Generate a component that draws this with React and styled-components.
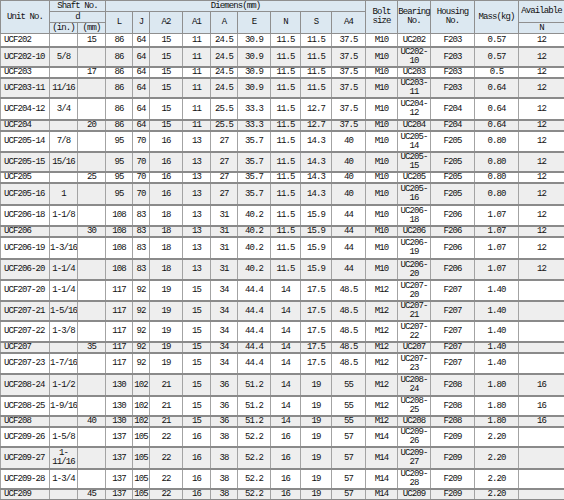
import styled, { createGlobalStyle } from 'styled-components';

const GlobalStyle = createGlobalStyle`
  html, body {
    margin: 0;
    padding: 0;
    background: #ffffff;
  }
  body {
    font-family: "Liberation Mono", "DejaVu Sans Mono", monospace;
  }
`;

const Table = styled.table`
  width: 564px;
  table-layout: fixed;
  border-collapse: collapse;
  font-family: "Liberation Mono", "DejaVu Sans Mono", monospace;
  font-size: 9px;
  letter-spacing: -0.9px;
  color: #111111;
`;

const HeadCell = styled.th`
  background: #dce8f1;
  border: 1px solid #8f8f8f;
  font-weight: normal;
  text-align: center;
  vertical-align: middle;
  padding: 0;
  height: 10px;
  line-height: 9px;
  white-space: nowrap;
`;

const Row = styled.tr`
  background: ${props => (props.$alt ? '#eeeeee' : '#ffffff')};
`;

const Cell = styled.td`
  height: ${props => props.$h - 2}px;
  border-left: 1px solid #a3a3a3;
  border-right: 1px solid #a3a3a3;
  border-bottom: 2px solid #8a8a8a;
  padding: 0 ${props => (props.$left ? '3px' : '0')};
  text-align: ${props => (props.$left ? 'left' : 'center')};
  vertical-align: middle;
  line-height: 9px;
  white-space: nowrap;
  overflow: hidden;
`;

const widths = [49, 28, 28, 27, 17, 33, 28, 27, 33, 30, 31, 34, 32, 33, 44, 44, 46];

// 列: unit, in, mm, L, J, A2, A1, A, E, N, S, A4, bolt, bearing, housing, mass, N
const rows = [
  [14, 'UCF202', '', '15', '86', '64', '15', '11', '24.5', '30.9', '11.5', '11.5', '37.5', 'M10', 'UC202', 'F203', '0.57', '12'],
  [18, 'UCF202-10', '5/8', '', '86', '64', '15', '11', '24.5', '30.9', '11.5', '11.5', '37.5', 'M10', 'UC202-|10', 'F203', '0.57', '12'],
  [11, 'UCF203', '', '17', '86', '64', '15', '11', '24.5', '30.9', '11.5', '11.5', '37.5', 'M10', 'UC203', 'F203', '0.5', '12'],
  [19, 'UCF203-11', '11/16', '', '86', '64', '15', '11', '24.5', '30.9', '11.5', '11.5', '37.5', 'M10', 'UC203-|11', 'F203', '0.64', '12'],
  [22, 'UCF204-12', '3/4', '', '86', '64', '15', '11', '25.5', '33.3', '11.5', '12.7', '37.5', 'M10', 'UC204-|12', 'F204', '0.64', '12'],
  [10, 'UCF204', '', '20', '86', '64', '15', '11', '25.5', '33.3', '11.5', '12.7', '37.5', 'M10', 'UC204', 'F204', '0.64', '12'],
  [21, 'UCF205-14', '7/8', '', '95', '70', '16', '13', '27', '35.7', '11.5', '14.3', '40', 'M10', 'UC205-|14', 'F205', '0.80', '12'],
  [18, 'UCF205-15', '15/16', '', '95', '70', '16', '13', '27', '35.7', '11.5', '14.3', '40', 'M10', 'UC205-|15', 'F205', '0.80', '12'],
  [11, 'UCF205', '', '25', '95', '70', '16', '13', '27', '35.7', '11.5', '14.3', '40', 'M10', 'UC205', 'F205', '0.80', '12'],
  [22, 'UCF205-16', '1', '', '95', '70', '16', '13', '27', '35.7', '11.5', '14.3', '40', 'M10', 'UC205-|16', 'F205', '0.80', '12'],
  [21, 'UCF206-18', '1-1/8', '', '108', '83', '18', '13', '31', '40.2', '11.5', '15.9', '44', 'M10', 'UC206-|18', 'F206', '1.07', '12'],
  [11, 'UCF206', '', '30', '108', '83', '18', '13', '31', '40.2', '11.5', '15.9', '44', 'M10', 'UC206', 'F206', '1.07', '12'],
  [22, 'UCF206-19', '1-3/16', '', '108', '83', '18', '13', '31', '40.2', '11.5', '15.9', '44', 'M10', 'UC206-|19', 'F206', '1.07', '12'],
  [21, 'UCF206-20', '1-1/4', '', '108', '83', '18', '13', '31', '40.2', '11.5', '15.9', '44', 'M10', 'UC206-|20', 'F206', '1.07', '12'],
  [21, 'UCF207-20', '1-1/4', '', '117', '92', '19', '15', '34', '44.4', '14', '17.5', '48.5', 'M12', 'UC207-|20', 'F207', '1.40', ''],
  [20, 'UCF207-21', '1-5/16', '', '117', '92', '19', '15', '34', '44.4', '14', '17.5', '48.5', 'M12', 'UC207-|21', 'F207', '1.40', ''],
  [21, 'UCF207-22', '1-3/8', '', '117', '92', '19', '15', '34', '44.4', '14', '17.5', '48.5', 'M12', 'UC207-|22', 'F207', '1.40', ''],
  [11, 'UCF207', '', '35', '117', '92', '19', '15', '34', '44.4', '14', '17.5', '48.5', 'M12', 'UC207', 'F207', '1.40', ''],
  [21, 'UCF207-23', '1-7/16', '', '117', '92', '19', '15', '34', '44.4', '14', '17.5', '48.5', 'M12', 'UC207-|23', 'F207', '1.40', ''],
  [22, 'UCF208-24', '1-1/2', '', '130', '102', '21', '15', '36', '51.2', '14', '19', '55', 'M12', 'UC208-|24', 'F208', '1.80', '16'],
  [20, 'UCF208-25', '1-9/16', '', '130', '102', '21', '15', '36', '51.2', '14', '19', '55', 'M12', 'UC208-|25', 'F208', '1.80', '16'],
  [11, 'UCF208', '', '40', '130', '102', '21', '15', '36', '51.2', '14', '19', '55', 'M12', 'UC208', 'F208', '1.80', '16'],
  [20, 'UCF209-26', '1-5/8', '', '137', '105', '22', '16', '38', '52.2', '16', '19', '57', 'M14', 'UC209-|26', 'F209', '2.20', ''],
  [22, 'UCF209-27', '1-|11/16', '', '137', '105', '22', '16', '38', '52.2', '16', '19', '57', 'M14', 'UC209-|27', 'F209', '2.20', ''],
  [20, 'UCF209-28', '1-3/4', '', '137', '105', '22', '16', '38', '52.2', '16', '19', '57', 'M14', 'UC209-|28', 'F209', '2.20', ''],
  [11, 'UCF209', '', '45', '137', '105', '22', '16', '38', '52.2', '16', '19', '57', 'M14', 'UC209', 'F209', '2.20', ''],
];

// "|" で改行
const lines = (text) => {
  const parts = text.split('|');
  return parts.map((p, i) => (
    <span key={i}>
      {i > 0 && <br />}
      {p}
    </span>
  ));
};

const dimensions = ['L', 'J', 'A2', 'A1', 'A', 'E', 'N', 'S', 'A4'];

export default function App() {
  return (
    <>
      <GlobalStyle />
      <Table>
        <colgroup>
          {widths.map((w, i) => (
            <col key={i} style={{ width: w }} />
          ))}
        </colgroup>
        <thead>
          <tr>
            <HeadCell rowSpan={3}>Unit No.</HeadCell>
            <HeadCell colSpan={2}>Shaft No.</HeadCell>
            <HeadCell colSpan={9}>Diemens(mm)</HeadCell>
            <HeadCell rowSpan={3}>Bolt<br />size</HeadCell>
            <HeadCell rowSpan={3}>Bearing<br />No.</HeadCell>
            <HeadCell rowSpan={3}>Housing<br />No.</HeadCell>
            <HeadCell rowSpan={3}>Mass(kg)</HeadCell>
            <HeadCell rowSpan={2}>Available</HeadCell>
          </tr>
          <tr>
            <HeadCell colSpan={2}>d</HeadCell>
            {dimensions.map(d => (
              <HeadCell key={d} rowSpan={2}>{d}</HeadCell>
            ))}
          </tr>
          <tr>
            <HeadCell>(in.)</HeadCell>
            <HeadCell>(mm)</HeadCell>
            <HeadCell>N</HeadCell>
          </tr>
        </thead>
        <tbody>
          {rows.map((row, r) => {
            const [h, ...cells] = row;
            return (
              <Row key={r} $alt={r % 2 === 1}>
                {cells.map((c, i) => (
                  <Cell key={i} $h={h} $left={i === 0}>
                    {lines(c)}
                  </Cell>
                ))}
              </Row>
            );
          })}
        </tbody>
      </Table>
    </>
  );
}
